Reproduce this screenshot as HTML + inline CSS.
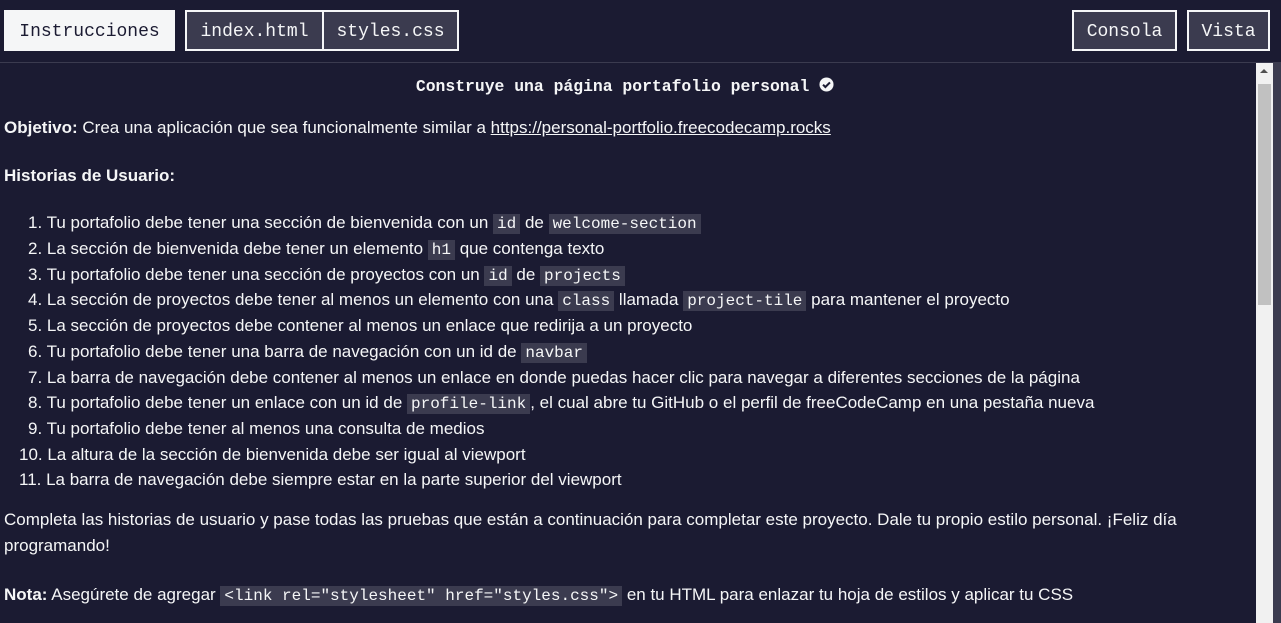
<!DOCTYPE html>
<html><head><meta charset="utf-8"><style>
*{box-sizing:border-box;margin:0;padding:0}
body{width:1281px;height:623px;overflow:hidden;background:#1b1b32;color:#f5f6f7;font-family:"Liberation Sans",sans-serif;position:relative}
.btn{position:absolute;top:10px;height:41px;font-family:"Liberation Mono",monospace;font-size:18px;line-height:41px;text-align:center;border:2px solid #f5f6f7;background:#3b3b4f;color:#f5f6f7}
.hdr{position:absolute;left:0;top:62px;width:1281px;height:1px;background:#3b3b4f}
.title{position:absolute;top:77px;left:0;width:1250px;text-align:center;font-family:"Liberation Mono",monospace;font-weight:bold;font-size:16.4px}
.l{position:absolute;left:4px;white-space:nowrap;font-size:17px}
code{font-family:"Liberation Mono",monospace;font-size:16px;background:#3b3b4f;padding:1px 4px}
a{color:#f5f6f7;text-decoration:underline}
.sb{position:absolute;left:1256px;top:63px;width:17px;height:560px;background:#f1f1f1}
.th{position:absolute;left:1258px;top:84px;width:13px;height:221px;background:#c1c1c1}
.arr{position:absolute;left:1260px;top:69px;width:0;height:0;border-left:4px solid transparent;border-right:4px solid transparent;border-bottom:4px solid #505050}
.rs{position:absolute;left:1273px;top:63px;width:8px;height:560px;background:#3b3b4f}
</style></head><body>
<div class="btn" style="left:4px;width:171px;background:#f5f6f7;color:#1b1b32;border-color:#f5f6f7">Instrucciones</div>
<div class="btn" style="left:185px;width:139px">index.html</div>
<div class="btn" style="left:322px;width:137px">styles.css</div>
<div class="btn" style="left:1072px;width:105px">Consola</div>
<div class="btn" style="left:1187px;width:83px">Vista</div>
<div class="hdr"></div>
<div class="title">Construye una página portafolio personal <svg width="15" height="15" viewBox="0 0 16 16" style="vertical-align:-1px"><circle cx="8" cy="8" r="7.5" fill="#f5f6f7"/><path d="M4.3 8.2l2.5 2.5 4.9-4.9" stroke="#1b1b32" stroke-width="2.2" fill="none"/></svg></div>
<div class="l" style="top:118px"><b>Objetivo:</b> Crea una aplicación que sea funcionalmente similar a <a>https://personal-portfolio.freecodecamp.rocks</a></div>
<div class="l" style="top:166px"><b>Historias de Usuario:</b></div>
<div class="l" style="top:213px;left:28px">1. Tu portafolio debe tener una sección de bienvenida con un <code>id</code> de <code>welcome-section</code></div>
<div class="l" style="top:239px;left:28px">2. La sección de bienvenida debe tener un elemento <code>h1</code> que contenga texto</div>
<div class="l" style="top:265px;left:28px">3. Tu portafolio debe tener una sección de proyectos con un <code>id</code> de <code>projects</code></div>
<div class="l" style="top:290px;left:28px">4. La sección de proyectos debe tener al menos un elemento con una <code>class</code> llamada <code>project-tile</code> para mantener el proyecto</div>
<div class="l" style="top:316px;left:28px">5. La sección de proyectos debe contener al menos un enlace que redirija a un proyecto</div>
<div class="l" style="top:342px;left:28px">6. Tu portafolio debe tener una barra de navegación con un id de <code>navbar</code></div>
<div class="l" style="top:368px;left:28px">7. La barra de navegación debe contener al menos un enlace en donde puedas hacer clic para navegar a diferentes secciones de la página</div>
<div class="l" style="top:393px;left:28px">8. Tu portafolio debe tener un enlace con un id de <code>profile-link</code>, el cual abre tu GitHub o el perfil de freeCodeCamp en una pestaña nueva</div>
<div class="l" style="top:419px;left:28px">9. Tu portafolio debe tener al menos una consulta de medios</div>
<div class="l" style="top:445px;left:19px">10. La altura de la sección de bienvenida debe ser igual al viewport</div>
<div class="l" style="top:470px;left:19px">11. La barra de navegación debe siempre estar en la parte superior del viewport</div>
<div class="l" style="top:510px">Completa las historias de usuario y pase todas las pruebas que están a continuación para completar este proyecto. Dale tu propio estilo personal. ¡Feliz día</div>
<div class="l" style="top:536px">programando!</div>
<div class="l" style="top:585px"><b>Nota:</b> Asegúrete de agregar <code>&lt;link rel="stylesheet" href="styles.css"&gt;</code> en tu HTML para enlazar tu hoja de estilos y aplicar tu CSS</div>
<div class="sb"></div><div class="th"></div><div class="arr"></div><div class="rs"></div>
</body></html>
